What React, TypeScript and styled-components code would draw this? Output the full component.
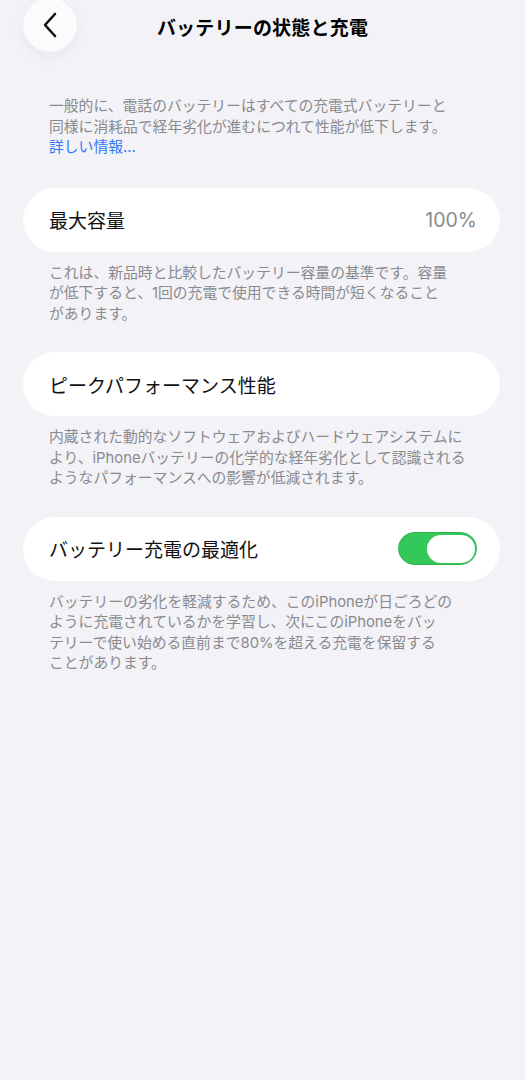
import styled, { createGlobalStyle } from "styled-components";

const GlobalStyle = createGlobalStyle`
  html, body {
    margin: 0;
    padding: 0;
    background: #f2f2f7;
  }
  body {
    font-family: Inter, "Noto Sans CJK JP", sans-serif;
    -webkit-font-smoothing: antialiased;
  }
`;

const Page = styled.div`
  width: 525px;
  min-height: 1080px;
  background: #f2f2f7;
  box-sizing: border-box;
`;

const Header = styled.header`
  display: grid;
  grid-template-columns: 54px 1fr 54px;
  align-items: center;
  height: 52px;
  padding: 0 23px;
`;

const BackButton = styled.button`
  width: 54px;
  height: 54px;
  margin-top: -2px;
  border: none;
  border-radius: 50%;
  background: #fbfbfd;
  box-shadow: 0 4px 14px rgba(0, 0, 0, 0.05);
  display: flex;
  align-items: center;
  justify-content: center;
  padding: 0;
`;

const Title = styled.h1`
  margin: 0;
  text-align: center;
  font-size: 19px;
  font-weight: 700;
  color: #000;
  letter-spacing: 0.2px;
`;

const Note = styled.p<{ $top?: number }>`
  margin: ${(p) => p.$top ?? 11}px 0 0;
  padding: 0 49px;
  font-size: 14.8px;
  line-height: 20.5px;
  color: #8a8a8e;
  white-space: nowrap;
`;

const Link = styled.a`
  color: #3478f6;
  text-decoration: none;
`;

const Section = styled.section<{ $top?: number }>`
  margin-top: ${(p) => p.$top ?? 28}px;
`;

const Card = styled.div`
  margin: 0 25px 0 23px;
  height: 64px;
  border-radius: 32px;
  background: #fff;
  display: flex;
  align-items: center;
  justify-content: space-between;
  padding: 0 23px 0 26px;
`;

const Label = styled.span`
  font-size: 19px;
  color: #111;
`;

const Value = styled.span`
  font-size: 19.5px;
  color: #8a8a8e;
`;

const Toggle = styled.div<{ $on: boolean }>`
  width: 79px;
  height: 33px;
  box-sizing: border-box;
  border-radius: 17px;
  background: ${(p) => (p.$on ? "#34c759" : "#e5e5ea")};
  border: 1.5px solid ${(p) => (p.$on ? "#2fb350" : "#d8d8dc")};
  display: flex;
  align-items: center;
  justify-content: ${(p) => (p.$on ? "flex-end" : "flex-start")};
  padding: 0 1px;
`;

const Knob = styled.div`
  width: 48px;
  height: 28px;
  border-radius: 14px;
  background: #fff;
`;

const Chevron = () => (
  <svg width="16" height="26" viewBox="0 0 16 26" fill="none">
    <path
      d="M13 2 L3 13 L13 24"
      stroke="#111"
      strokeWidth="2.6"
      strokeLinecap="round"
      strokeLinejoin="round"
    />
  </svg>
);

const App = () => {
  return (
    <Page>
      <GlobalStyle />
      <Header>
        <BackButton aria-label="戻る">
          <Chevron />
        </BackButton>
        <Title>バッテリーの状態と充電</Title>
        <span />
      </Header>

      <Note $top={44}>
        一般的に、電話のバッテリーはすべての充電式バッテリーと
        <br />
        同様に消耗品で経年劣化が進むにつれて性能が低下します。
        <br />
        <Link href="#">詳しい情報...</Link>
      </Note>

      <Section $top={30}>
        <Card>
          <Label>最大容量</Label>
          <Value>100%</Value>
        </Card>
        <Note>
          これは、新品時と比較したバッテリー容量の基準です。容量
          <br />
          が低下すると、1回の充電で使用できる時間が短くなること
          <br />
          があります。
        </Note>
      </Section>

      <Section>
        <Card>
          <Label>ピークパフォーマンス性能</Label>
        </Card>
        <Note>
          内蔵された動的なソフトウェアおよびハードウェアシステムに
          <br />
          より、iPhoneバッテリーの化学的な経年劣化として認識される
          <br />
          ようなパフォーマンスへの影響が低減されます。
        </Note>
      </Section>

      <Section>
        <Card>
          <Label>バッテリー充電の最適化</Label>
          <Toggle $on={true}>
            <Knob />
          </Toggle>
        </Card>
        <Note>
          バッテリーの劣化を軽減するため、このiPhoneが日ごろどの
          <br />
          ように充電されているかを学習し、次にこのiPhoneをバッ
          <br />
          テリーで使い始める直前まで80%を超える充電を保留する
          <br />
          ことがあります。
        </Note>
      </Section>
    </Page>
  );
};

export default App;
